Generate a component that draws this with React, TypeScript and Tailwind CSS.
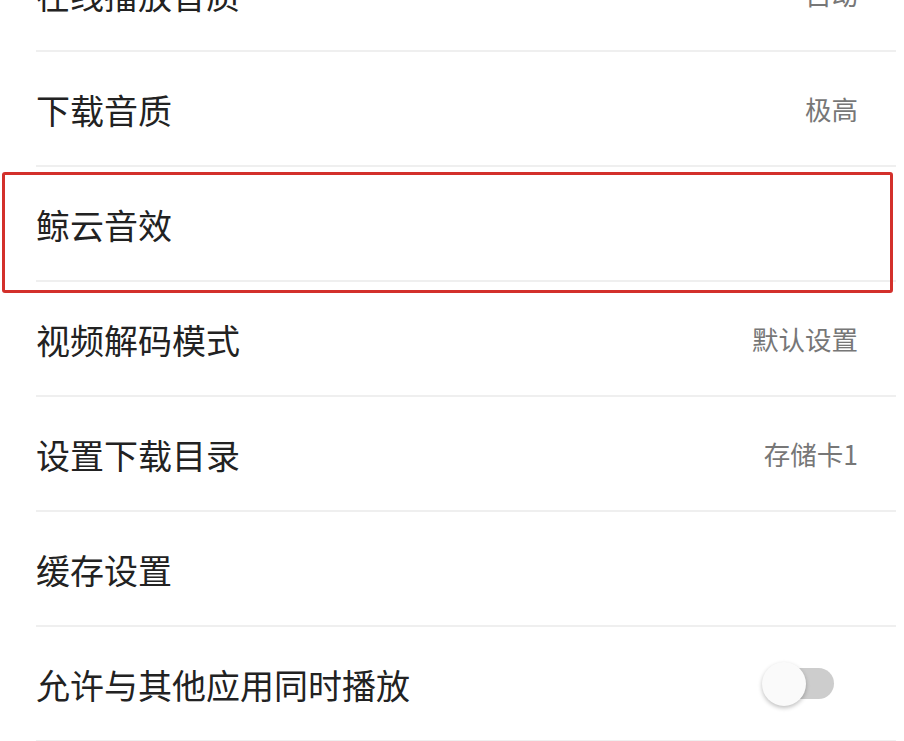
import React from "react";

type Row = { label: string; value?: string; toggle?: boolean };

const rows: Row[] = [
  { label: "在线播放音质", value: "自动" },
  { label: "下载音质", value: "极高" },
  { label: "鲸云音效" },
  { label: "视频解码模式", value: "默认设置" },
  { label: "设置下载目录", value: "存储卡1" },
  { label: "缓存设置" },
  { label: "允许与其他应用同时播放", toggle: true },
];

export default function App() {
  return (
    <div
      className="relative w-[904px] h-[741px] overflow-hidden bg-white"
      style={{ fontFamily: '"Noto Sans CJK SC", "Noto Sans", sans-serif' }}
    >
      <div className="mt-[-63px] flex flex-col">
        {rows.map((r, i) => (
          <div
            key={i}
            className="ml-[36px] mr-[8px] h-[115px] flex items-center justify-between border-b-2 border-[#efefef]"
          >
            <span className="text-[34px] leading-none text-[#222222] pt-[3px]">{r.label}</span>
            {r.value && (
              <span className="mr-[38px] text-[26.5px] leading-none text-[#777777] pt-[1px]">{r.value}</span>
            )}
            {r.toggle && (
              <div className="relative mr-[62px] w-[72px] h-[40px] flex items-center">
                <div className="absolute right-0 w-[62px] h-[31px] rounded-full bg-[#cdcdcd]" />
                <div className="absolute left-0 w-[44px] h-[44px] rounded-full bg-[#fafafa] shadow-[0_2px_4px_rgba(0,0,0,0.25)]" />
              </div>
            )}
          </div>
        ))}
      </div>
      <div className="absolute left-[2px] top-[172px] w-[891px] h-[121px] border-[3px] border-[#d3302b] rounded-[3px]" />
    </div>
  );
}
